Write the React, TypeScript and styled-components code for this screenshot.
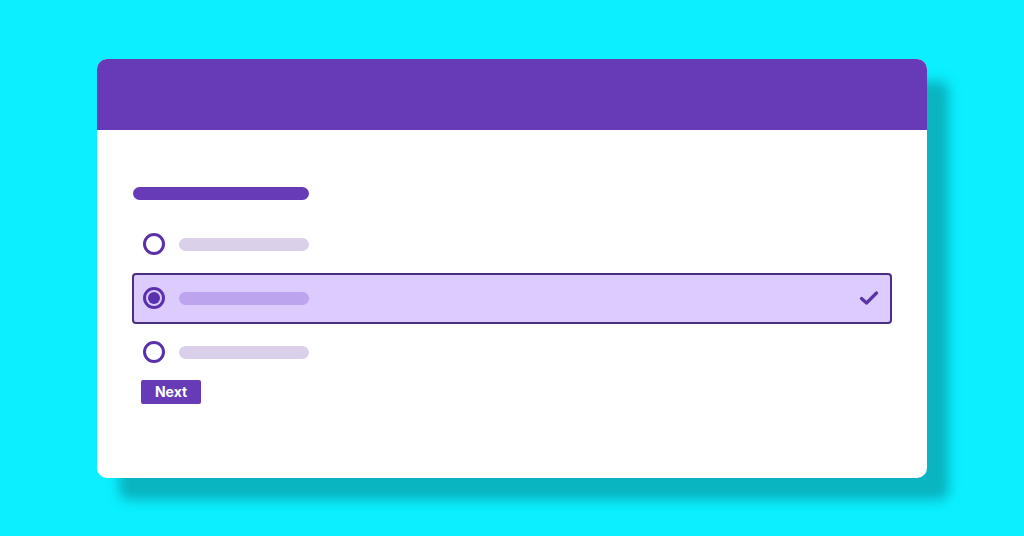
import React from "react";
import styled, { createGlobalStyle } from "styled-components";

const GlobalStyle = createGlobalStyle`
  html, body {
    margin: 0;
    padding: 0;
    background: #0beffe;
  }
  body {
    font-family: Inter, "Noto Sans", "Liberation Sans", sans-serif;
  }
`;

const Page = styled.div`
  width: 1024px;
  height: 536px;
  display: flex;
  align-items: center;
  justify-content: center;
  background: #0beffe;
`;

const Card = styled.div`
  width: 830px;
  height: 419px;
  background: #ffffff;
  border-radius: 10px;
  overflow: hidden;
  box-shadow: 22px 22px 12px #0ab4c1;
  display: flex;
  flex-direction: column;
`;

const Header = styled.div`
  height: 71px;
  background: #673bb7;
  flex-shrink: 0;
`;

const Body = styled.div`
  padding: 57px 35px 0 35px;
  display: flex;
  flex-direction: column;
`;

const TitleBar = styled.div`
  width: 176px;
  height: 13px;
  margin-left: 1px;
  border-radius: 7px;
  background: #673bb7;
`;

const Options = styled.div`
  margin-top: 19px;
  display: flex;
  flex-direction: column;
  gap: 3px;
`;

const Option = styled.div<{ $selected?: boolean }>`
  height: 51px;
  box-sizing: border-box;
  display: flex;
  align-items: center;
  padding: 0 11px 0 9px;
  border: 2px solid ${(p) => (p.$selected ? "#4a2e82" : "transparent")};
  border-radius: 4px;
  background: ${(p) => (p.$selected ? "#dccbff" : "transparent")};
`;

const Radio = styled.div<{ $checked?: boolean }>`
  width: 22px;
  height: 22px;
  box-sizing: border-box;
  border-radius: 50%;
  border: 3px solid #5b30ad;
  background: #ffffff;
  flex-shrink: 0;
  display: flex;
  align-items: center;
  justify-content: center;
  ${(p) => (p.$checked ? "background: #dccbff;" : "")}
`;

const Dot = styled.div`
  width: 12px;
  height: 12px;
  border-radius: 50%;
  background: #5b30ad;
`;

const LabelBar = styled.div<{ $selected?: boolean }>`
  width: 130px;
  height: 13px;
  margin-left: 14px;
  border-radius: 7px;
  background: ${(p) => (p.$selected ? "#bca4ee" : "#dad0e9")};
`;

const Spacer = styled.div`
  flex: 1;
`;

const Check = styled.svg`
  width: 20px;
  height: 16px;
  display: block;
`;

const NextButton = styled.button`
  margin: 2px 0 0 9px;
  width: 60px;
  height: 24px;
  border: none;
  border-radius: 2px;
  background: #673bb7;
  color: #ffffff;
  font-family: Inter, "Noto Sans", "Liberation Sans", sans-serif;
  font-weight: 700;
  font-size: 14px;
  padding: 0;
  align-self: flex-start;
  cursor: pointer;
`;

const items = [false, true, false];

export default function App() {
  return (
    <>
      <GlobalStyle />
      <Page>
        <Card>
          <Header />
          <Body>
            <TitleBar />
            <Options>
              {items.map((sel, i) => (
                <Option key={i} $selected={sel}>
                  <Radio $checked={sel}>{sel && <Dot />}</Radio>
                  <LabelBar $selected={sel} />
                  <Spacer />
                  {sel && (
                    <Check viewBox="0 0 20 16">
                      <path
                        d="M2.5 8.5 L7.5 13 L17.5 3"
                        fill="none"
                        stroke="#5a33a8"
                        strokeWidth="3.2"
                        strokeLinecap="round"
                        strokeLinejoin="round"
                      />
                    </Check>
                  )}
                </Option>
              ))}
            </Options>
            <NextButton>Next</NextButton>
          </Body>
        </Card>
      </Page>
    </>
  );
}
